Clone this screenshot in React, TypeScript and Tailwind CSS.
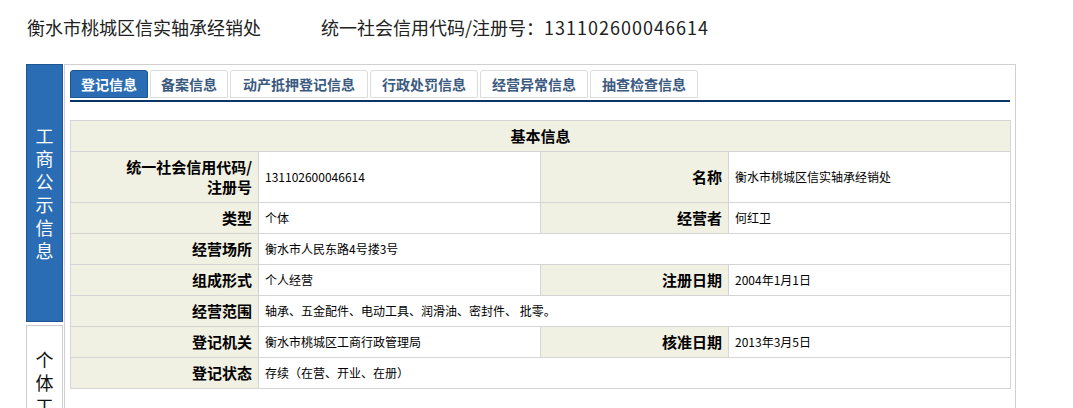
const tabs = [
  { label: "登记信息", w: "w-[78px]", active: true },
  { label: "备案信息", w: "w-[78px]" },
  { label: "动产抵押登记信息", w: "w-[138px]" },
  { label: "行政处罚信息", w: "w-[108px]" },
  { label: "经营异常信息", w: "w-[108px]" },
  { label: "抽查检查信息", w: "w-[108px]" },
];

const font = { fontFamily: '"SimSun", "Noto Sans CJK SC", sans-serif' };

function Label({ children }: { children: React.ReactNode }) {
  return (
    <td className="border border-[#d5d5d5] bg-[#f0f0e3] pr-[6px] text-right text-[15px] font-bold leading-[20px] text-black">
      {children}
    </td>
  );
}

function Value({ children, span }: { children?: React.ReactNode; span?: number }) {
  return (
    <td
      colSpan={span}
      className="border border-[#d5d5d5] bg-white pl-[6px] text-[12px] leading-[20px] text-black"
    >
      {children}
    </td>
  );
}

export default function App() {
  return (
    <div className="w-[1073px] bg-white" style={font}>
      <div className="flex h-[54px] items-center pl-[27px] text-[18px] text-[#222]" style={{ fontFamily: '"Noto Sans CJK SC", sans-serif' }}>
        <span className="mr-[60px]">衡水市桃城区信实轴承经销处</span>
        <span>
          统一社会信用代码/注册号：<span className="tracking-[1px]">131102600046614</span>
        </span>
      </div>

      <div className="mt-[10px] ml-[26px] flex">
        <div className="flex w-[37px] flex-col">
          <div className="flex h-[258px] flex-col items-center justify-center border border-[#1d5593] bg-[#2a6db5] text-[18px] leading-[23px] text-white">
            {"工商公示信息".split("").map((c) => (
              <span key={c}>{c}</span>
            ))}
          </div>
          <div className="mt-[3px] flex h-[120px] flex-col items-center border border-[#ccc] bg-white pt-[22px] text-[18px] leading-[23px] text-[#111]">
            {"个体工商".split("").map((c, i) => (
              <span key={i}>{c}</span>
            ))}
          </div>
        </div>

        <div className="ml-px h-[400px] w-[952px] border border-[#d0d0d0] px-[5px] pt-[5px]">
          <div className="flex gap-[2px] pb-[2px] border-b-2 border-[#0b3566]">
            {tabs.map((t) => (
              <div
                key={t.label}
                className={`${t.w} flex h-[28px] items-center justify-center rounded-t-[3px] border text-[14px] font-bold ${
                  t.active
                    ? "border-[#1d5593] bg-[#2a6db5] text-white"
                    : "border-[#dcdcdc] bg-white text-[#3b5a80]"
                }`}
              >
                {t.label}
              </div>
            ))}
          </div>

          <table className="mt-[18px] w-[940px] table-fixed border-collapse">
            <colgroup>
              <col className="w-[188px]" />
              <col className="w-[282px]" />
              <col className="w-[188px]" />
              <col className="w-[282px]" />
            </colgroup>
            <tbody>
              <tr className="h-[31px]">
                <th colSpan={4} className="border border-[#d5d5d5] bg-[#f0f0e3] text-center text-[15px] font-bold text-black">
                  基本信息
                </th>
              </tr>
              <tr className="h-[51px]">
                <Label>
                  统一社会信用代码/
                  <br />
                  注册号
                </Label>
                <Value>131102600046614</Value>
                <Label>名称</Label>
                <Value>衡水市桃城区信实轴承经销处</Value>
              </tr>
              <tr className="h-[31px]">
                <Label>类型</Label>
                <Value>个体</Value>
                <Label>经营者</Label>
                <Value>何红卫</Value>
              </tr>
              <tr className="h-[31px]">
                <Label>经营场所</Label>
                <Value span={3}>衡水市人民东路4号搂3号</Value>
              </tr>
              <tr className="h-[31px]">
                <Label>组成形式</Label>
                <Value>个人经营</Value>
                <Label>注册日期</Label>
                <Value>2004年1月1日</Value>
              </tr>
              <tr className="h-[31px]">
                <Label>经营范围</Label>
                <Value span={3}>轴承、五金配件、电动工具、润滑油、密封件、 批零。</Value>
              </tr>
              <tr className="h-[31px]">
                <Label>登记机关</Label>
                <Value>衡水市桃城区工商行政管理局</Value>
                <Label>核准日期</Label>
                <Value>2013年3月5日</Value>
              </tr>
              <tr className="h-[31px]">
                <Label>登记状态</Label>
                <Value span={3}>存续（在营、开业、在册）</Value>
              </tr>
            </tbody>
          </table>

          <div className="mt-[19px] h-[30px] border-t border-[#d5d5d5]" />
        </div>
      </div>
    </div>
  );
}
